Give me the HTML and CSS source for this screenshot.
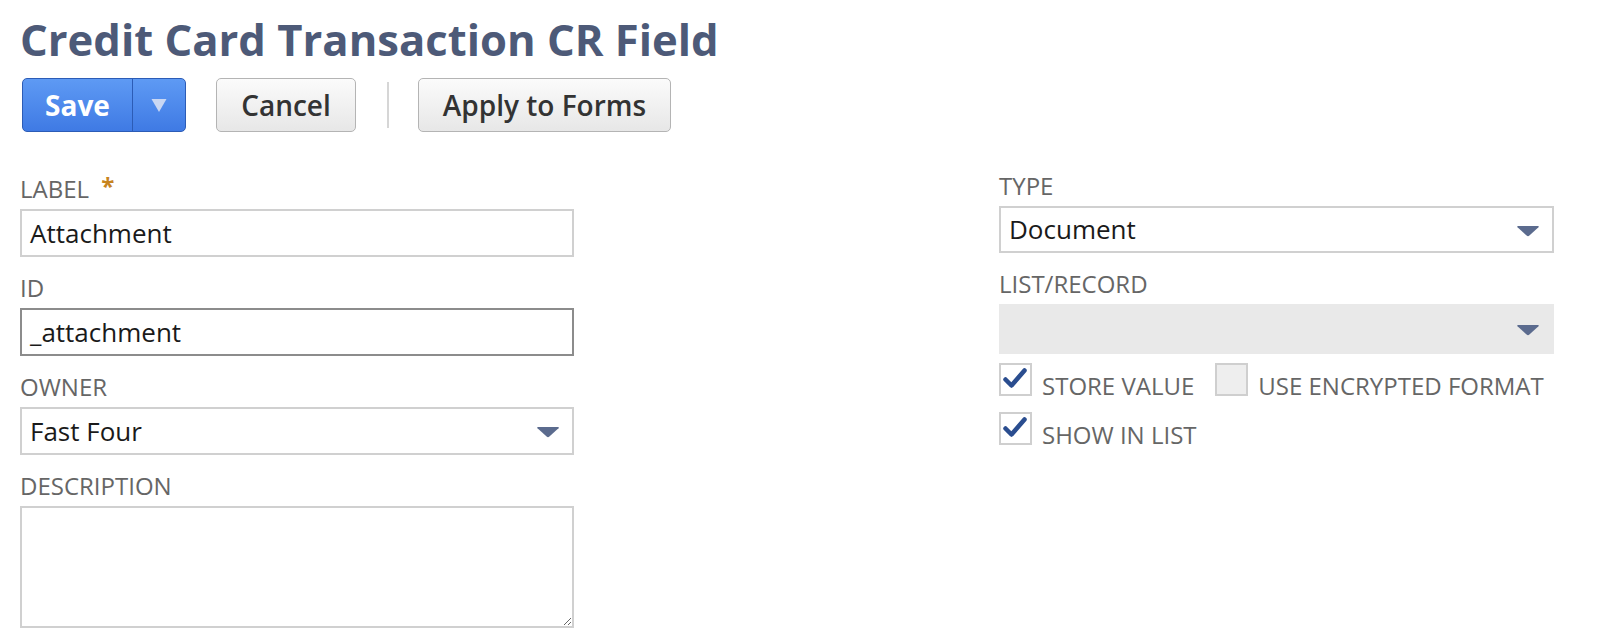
FILE: index.html
```html
<!DOCTYPE html>
<html>
<head>
<meta charset="utf-8">
<link rel="stylesheet" href="styles.css">
</head>
<body>
<div class="page">
  <h1 class="title">Credit Card Transaction CR Field</h1>
  <div class="toolbar">
    <div class="btn-split">
      <button class="btn-save">Save</button>
      <button class="btn-save-menu" aria-label="More">
        <svg width="16" height="15" viewBox="0 0 16 15"><path d="M0.5 1 H15.5 L8 14 Z" fill="#c9d7f3"/></svg>
      </button>
    </div>
    <button class="btn btn-cancel">Cancel</button>
    <span class="sep"></span>
    <button class="btn btn-apply">Apply to Forms</button>
  </div>

  <div class="form">
    <div class="col col-left">
      <div class="field">
        <div class="label">LABEL <span class="req">*</span></div>
        <div class="input">Attachment</div>
      </div>
      <div class="field">
        <div class="label">ID</div>
        <div class="input input-focus">_attachment</div>
      </div>
      <div class="field">
        <div class="label">OWNER</div>
        <div class="input select">
          <span>Fast Four</span>
          <svg class="caret" width="24" height="12" viewBox="0 0 24 12"><path d="M2 1 H22 Q23.5 1 22.5 2.2 L13.4 10.6 Q12 11.8 10.6 10.6 L1.5 2.2 Q0.5 1 2 1 Z" fill="#5b6b8e"/></svg>
        </div>
      </div>
      <div class="field">
        <div class="label">DESCRIPTION</div>
        <textarea class="textarea"></textarea>
      </div>
    </div>

    <div class="col col-right">
      <div class="field">
        <div class="label">TYPE</div>
        <div class="input select">
          <span>Document</span>
          <svg class="caret" width="24" height="12" viewBox="0 0 24 12"><path d="M2 1 H22 Q23.5 1 22.5 2.2 L13.4 10.6 Q12 11.8 10.6 10.6 L1.5 2.2 Q0.5 1 2 1 Z" fill="#5b6b8e"/></svg>
        </div>
      </div>
      <div class="field field-tight">
        <div class="label">LIST/RECORD</div>
        <div class="input select disabled">
          <span></span>
          <svg class="caret" width="24" height="12" viewBox="0 0 24 12"><path d="M2 1 H22 Q23.5 1 22.5 2.2 L13.4 10.6 Q12 11.8 10.6 10.6 L1.5 2.2 Q0.5 1 2 1 Z" fill="#5b6b8e"/></svg>
        </div>
      </div>
      <div class="checks">
        <div class="check-row">
          <label class="check">
            <span class="box">
              <svg width="24" height="22" viewBox="0 0 24 22"><path d="M2.5 12.5 L8.5 18.5 L21.5 3.5" fill="none" stroke="#2a4d8f" stroke-width="4.5" stroke-linecap="round" stroke-linejoin="round"/></svg>
            </span>
            <span class="check-text">STORE VALUE</span>
          </label>
          <label class="check">
            <span class="box box-off"></span>
            <span class="check-text">USE ENCRYPTED FORMAT</span>
          </label>
        </div>
        <div class="check-row">
          <label class="check">
            <span class="box">
              <svg width="24" height="22" viewBox="0 0 24 22"><path d="M2.5 12.5 L8.5 18.5 L21.5 3.5" fill="none" stroke="#2a4d8f" stroke-width="4.5" stroke-linecap="round" stroke-linejoin="round"/></svg>
            </span>
            <span class="check-text">SHOW IN LIST</span>
          </label>
        </div>
      </div>
    </div>
  </div>
</div>
</body>
</html>
```

FILE: styles.css
```css
* { box-sizing: border-box; }

html, body {
  margin: 0;
  padding: 0;
  background: #ffffff;
}

body {
  font-family: "Open Sans", "Liberation Sans", sans-serif;
  color: #222222;
}

.page {
  padding: 13px 0 0 20px;
}

.title {
  margin: 0;
  font-size: 43.6px;
  line-height: 52px;
  font-weight: 700;
  color: #4d5a78;
}

.toolbar {
  margin-top: 13px;
  display: flex;
  align-items: center;
  height: 54px;
}

.btn-split {
  display: flex;
  height: 54px;
  border: 1px solid #2c5cb6;
  border-radius: 5px;
  background: linear-gradient(#5e9af4, #3f7ae4);
  overflow: hidden;
  margin-left: 2px;
}

.btn-save,
.btn-save-menu {
  font-family: "Open Sans", "Liberation Sans", sans-serif;
  border: 0;
  background: transparent;
  color: #ffffff;
  height: 100%;
  padding: 0;
  margin: 0;
}

.btn-save {
  width: 110px;
  font-size: 28px;
  font-weight: 700;
  border-right: 1px solid #2c5cb6;
}

.btn-save-menu {
  width: 52px;
  display: flex;
  align-items: center;
  justify-content: center;
}

.btn {
  font-family: "Open Sans", "Liberation Sans", sans-serif;
  height: 54px;
  padding: 0;
  font-size: 28px;
  font-weight: 600;
  color: #333333;
  border: 1px solid #b4b4b4;
  border-radius: 5px;
  background: linear-gradient(#fbfbfb, #e7e7e7);
}

.btn-cancel {
  width: 140px;
  margin-left: 30px;
}

.btn-apply {
  width: 253px;
  margin-left: 29px;
}

.sep {
  width: 2px;
  height: 46px;
  margin-left: 31px;
  background: #d6d6d6;
}

.form {
  margin-top: 42px;
  display: flex;
}

.col-left {
  width: 554px;
}

.col-right {
  width: 555px;
  margin-left: 425px;
  margin-top: -3px;
}

.field {
  margin-bottom: 16px;
}

.field-tight {
  margin-bottom: 9px;
}

.label {
  font-size: 24px;
  line-height: 30px;
  height: 30px;
  color: #666666;
  margin-bottom: 5px;
}

.req {
  color: #c7841f;
  font-weight: 700;
  margin-left: 6px;
  position: relative;
  top: -3px;
}

.input {
  height: 48px;
  border: 2px solid #d0d0d0;
  background: #ffffff;
  font-size: 26px;
  line-height: 44px;
  padding: 0 8px;
  color: #1a1a1a;
}

.col-right .input {
  height: 47px;
  line-height: 43px;
}

.input-focus {
  border-color: #8c8c8c;
}

.select {
  display: flex;
  align-items: center;
  justify-content: space-between;
  padding-right: 12px;
}

.col-right .select.disabled {
  background: #e9e9e9;
  border-color: #e9e9e9;
  height: 50px;
}

.caret {
  flex: none;
  margin-top: 2px;
}

.textarea {
  display: block;
  width: 554px;
  height: 122px;
  border: 2px solid #d0d0d0;
  background: #ffffff;
  resize: both;
  margin: 0;
  font-family: "Open Sans", "Liberation Sans", sans-serif;
  font-size: 26px;
}

.checks {
  display: flex;
  flex-direction: column;
  gap: 16px;
}

.check-row {
  display: flex;
  align-items: flex-end;
}

.check {
  display: flex;
  align-items: flex-end;
  margin-right: 21px;
  white-space: nowrap;
}

.box {
  width: 33px;
  height: 33px;
  border: 2px solid #cfcfcf;
  background: #ffffff;
  display: flex;
  align-items: center;
  justify-content: center;
  flex: none;
}

.box svg {
  margin-left: -2px;
  margin-top: -4px;
}

.box-off {
  background: #eeeeee;
}

.check-text {
  font-size: 24px;
  line-height: 24px;
  color: #666666;
  margin-left: 10px;
  margin-bottom: -2px;
}
```
